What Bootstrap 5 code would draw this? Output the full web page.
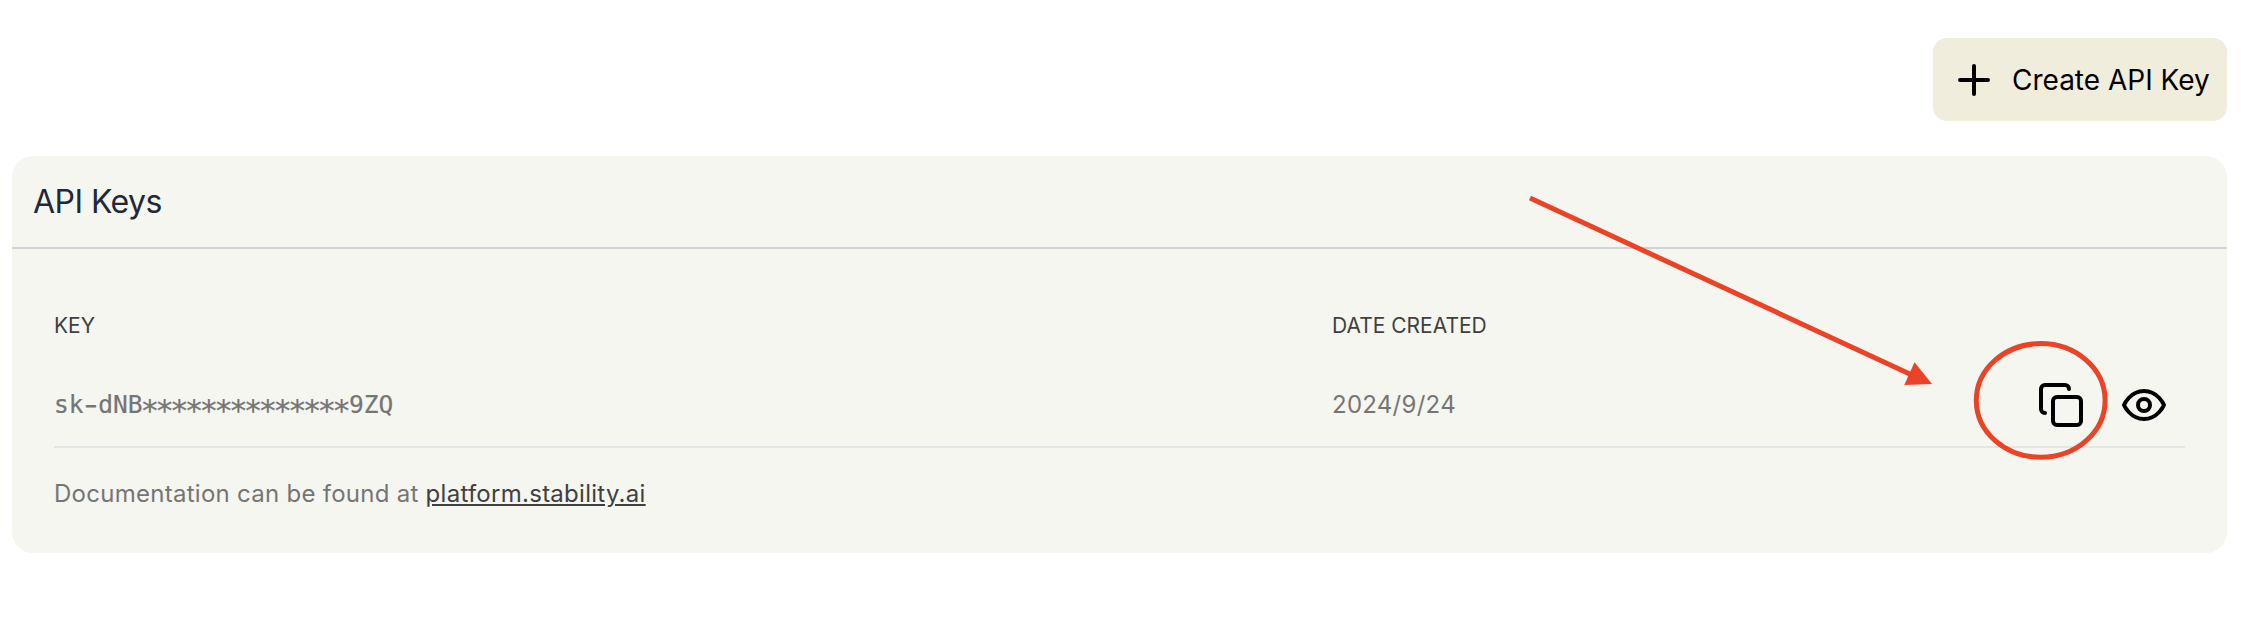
<!DOCTYPE html>
<html lang="en">
<head>
<meta charset="utf-8">
<meta name="viewport" content="width=device-width, initial-scale=1">
<title>API Keys</title>
<link href="https://cdn.jsdelivr.net/npm/bootstrap@5.3.0/dist/css/bootstrap.min.css" rel="stylesheet">
<style>
  body { font-family: Inter, "Liberation Sans", sans-serif; background: #fff; overflow: hidden; }
  .page { padding: 38px 17px 0 12px; }
  .btn-create { --bs-btn-bg: #f1eddd; --bs-btn-color: #000; --bs-btn-hover-bg: #e8e3cf; width: 294px; height: 83px; padding: 0 0 0 17px; border: 0; border-radius: 14px; font-size: 28px; gap: 14px; }
  .keys-card { --bs-card-bg: #f5f6f0; margin-top: 35px; height: 397px; border: 0; border-radius: 21px; }
  .keys-title { height: 93px; padding: 0 21px; border-bottom: 2px solid #d2d3da; font-size: 32px; line-height: 48px; letter-spacing: -.55px; color: #1f2937; }
  .keys-body { padding: 0 42px; font-size: 24px; color: #757575; letter-spacing: .27px; }
  .keys-grid { display: grid; grid-template-columns: 1278px 1fr auto; }
  .keys-head { height: 108px; padding-top: 62px; font-size: 21px; line-height: 30px; letter-spacing: 0; color: #404040; }
  .keys-row { height: 91px; border-bottom: 2px solid #e4e5e5; padding: 24px 17px 0 0; line-height: 48px; }
  .secret { font-family: "DejaVu Sans Mono", monospace; font-size: 24.5px; letter-spacing: 0; -webkit-text-stroke: .2px #757575; }
  .stars { position: relative; top: 7.5px; left: -2px; font-size: 31px; line-height: 0; letter-spacing: -3.91px; }
  .dash { display: inline-block; width: 14.75px; text-align: center; font-family: Inter, sans-serif; font-size: 31px; line-height: 0; position: relative; top: 3px; }
  .docs { padding-top: 28px; line-height: 36px; }
  .docs a { color: #404040; }
  .stroke-icon { width: 48px; height: 48px; fill: none; stroke: #000; stroke-width: 2; stroke-linecap: round; stroke-linejoin: round; flex: none; display: block; }
  .icon-btn { border: 0; background: none; padding: 0; }
  .actions { gap: 35px; }
  .annotation { left: 0; top: 0; pointer-events: none; }
</style>
</head>
<body class="position-relative">
<main class="page">
  <div class="d-flex justify-content-end">
    <button type="button" class="btn btn-create d-flex align-items-center text-nowrap">
      <svg class="stroke-icon" viewBox="0 0 24 24" aria-hidden="true"><path d="M12 5v14M5 12h14"/></svg>
      <span>Create API Key</span>
    </button>
  </div>
  <section class="card keys-card">
    <div class="keys-title d-flex align-items-center">API Keys</div>
    <div class="keys-body">
      <div class="keys-grid keys-head"><span>KEY</span><span>DATE CREATED</span></div>
      <div class="keys-grid keys-row">
        <span class="secret">sk<span class="dash">-</span>dNB<span class="stars">**************</span>9ZQ</span>
        <span>2024/9/24</span>
        <div class="d-flex align-items-start actions">
          <button type="button" class="icon-btn" aria-label="Copy"><svg class="stroke-icon" viewBox="0 0 24 24"><rect x="8" y="8" width="14" height="14" rx="2"/><path d="M4 16c-1.1 0-2-.9-2-2V4c0-1.1.9-2 2-2h10c1.1 0 2 .9 2 2"/></svg></button>
          <button type="button" class="icon-btn" aria-label="Show"><svg class="stroke-icon" viewBox="0 0 24 24"><path d="M2 12s3-7 10-7 10 7 10 7-3 7-10 7-10-7-10-7Z"/><circle cx="12" cy="12" r="3"/></svg></button>
        </div>
      </div>
      <div class="docs">Documentation can be found at <a href="#">platform.stability.ai</a></div>
    </div>
  </section>
</main>
<!-- Arrow and ring pointing out the copy button -->
<svg class="annotation position-absolute" width="2244" height="626" viewBox="0 0 2244 626" aria-hidden="true">
  <path d="M1530 198 1912 375" stroke="#ec4226" stroke-width="5"/>
  <path d="M1932 384 1914.5 362.3 1904.3 385Z" fill="#ec4226"/>
  <ellipse cx="2040.7" cy="400.4" rx="64.4" ry="56.8" fill="none" stroke="#ec4226" stroke-width="5"/>
</svg>
<script src="https://cdn.jsdelivr.net/npm/bootstrap@5.3.0/dist/js/bootstrap.bundle.min.js"></script>
</body>
</html>
